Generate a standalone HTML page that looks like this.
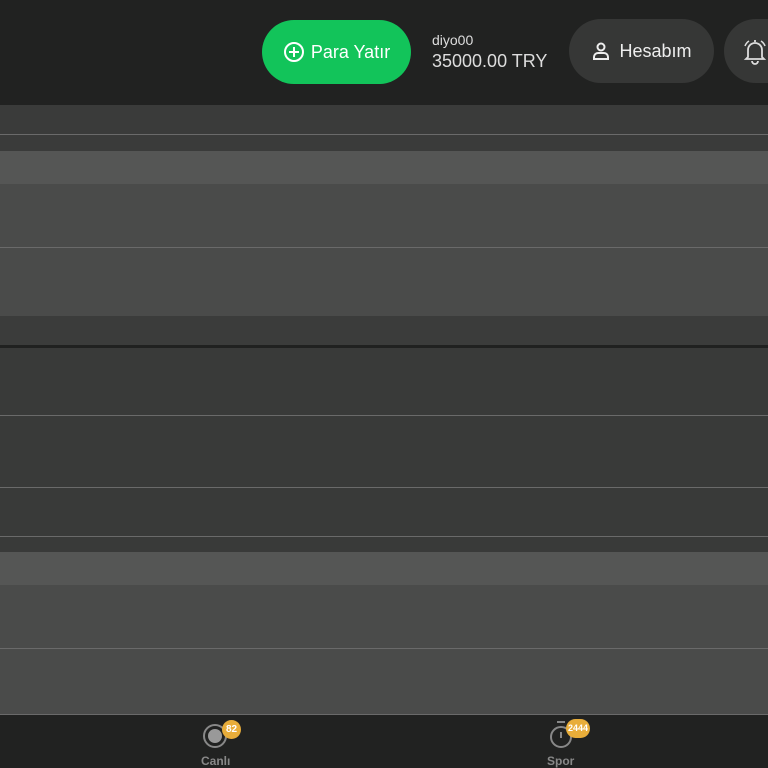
<!DOCTYPE html>
<html><head><meta charset="utf-8"><style>
*{margin:0;padding:0;box-sizing:border-box}
body{width:768px;height:768px;overflow:hidden;background:#393939;font-family:"Liberation Sans",sans-serif;position:relative}
.b{position:absolute;left:0;width:768px}
.l{position:absolute;left:0;width:768px;height:1px;background:#6a6a6a}
</style></head><body>
<div class="b" style="top:0;height:105px;background:#212221"></div>
<div class="b" style="top:105px;height:46px;background:#3a3b3a"></div>
<div class="l" style="top:134px"></div>
<div class="b" style="top:151px;height:33px;background:#555655"></div>
<div class="b" style="top:184px;height:132px;background:#4a4b4a"></div>
<div class="l" style="top:247px"></div>
<div class="b" style="top:316px;height:29px;background:#3b3c3b"></div>
<div class="b" style="top:345px;height:3px;background:#202120"></div>
<div class="b" style="top:348px;height:204px;background:#393a39"></div>
<div class="l" style="top:415px"></div>
<div class="l" style="top:487px"></div>
<div class="l" style="top:536px"></div>
<div class="b" style="top:552px;height:33px;background:#555655"></div>
<div class="b" style="top:585px;height:129px;background:#4a4b4a"></div>
<div class="l" style="top:648px"></div>
<div class="l" style="top:714px"></div>
<div class="b" style="top:715px;height:53px;background:#212221"></div>

<div style="position:absolute;left:262px;top:20px;width:149px;height:64px;border-radius:32px;background:#12c45a;color:#fff;font-size:18px;display:flex;align-items:center;justify-content:center;gap:6px">
<svg width="22" height="22" viewBox="0 0 22 22"><circle cx="11" cy="11" r="9" fill="none" stroke="#fff" stroke-width="2"/><path d="M11 6v10M6 11h10" stroke="#fff" stroke-width="2"/></svg>Para Yatır</div>
<div style="position:absolute;left:432px;top:32px;color:#ddd;font-size:14px">diyo00</div>
<div style="position:absolute;left:432px;top:51px;color:#ddd;font-size:18px">35000.00 TRY</div>
<div style="position:absolute;left:569px;top:19px;width:145px;height:64px;border-radius:32px;background:#363736;color:#eee;font-size:18px;display:flex;align-items:center;justify-content:center;gap:8px">
<svg width="20" height="20" viewBox="0 0 20 20"><circle cx="10" cy="6" r="3.5" fill="none" stroke="#eee" stroke-width="2"/><path d="M3 18v-2a4 4 0 0 1 4-4h6a4 4 0 0 1 4 4v2z" fill="none" stroke="#eee" stroke-width="2"/></svg>Hesabım</div>
<div style="position:absolute;left:724px;top:19px;width:80px;height:64px;border-radius:32px;background:#363736"></div>
<svg style="position:absolute;left:742px;top:37px" width="26" height="28" viewBox="0 0 26 28"><path d="M13 3v2M6 20V13a7 7 0 0 1 14 0v7l2 2H4z M10 24a3 3 0 0 0 6 0" fill="none" stroke="#ddd" stroke-width="1.8"/><path d="M3 9a10 10 0 0 1 4-5M23 9a10 10 0 0 0-4-5" fill="none" stroke="#ddd" stroke-width="1.5"/></svg>

<svg style="position:absolute;left:202px;top:723px" width="26" height="26" viewBox="0 0 26 26"><circle cx="13" cy="13" r="11" fill="none" stroke="#888" stroke-width="2"/><circle cx="13" cy="13" r="7" fill="#999"/></svg>
<div style="position:absolute;left:222px;top:720px;width:19px;height:19px;border-radius:50%;background:#e8ad3a;color:#fff;font-size:10px;font-weight:bold;text-align:center;line-height:19px">82</div>
<div style="position:absolute;left:201px;top:754px;color:#888;font-size:12px;font-weight:bold">Canlı</div>
<svg style="position:absolute;left:548px;top:720px" width="26" height="30" viewBox="0 0 26 30"><path d="M9 2h8" stroke="#888" stroke-width="2"/><circle cx="13" cy="17" r="10" fill="none" stroke="#888" stroke-width="2"/><path d="M13 12v6" stroke="#888" stroke-width="2"/></svg>
<div style="position:absolute;left:566px;top:719px;width:24px;height:19px;border-radius:10px;background:#e8ad3a;color:#fff;font-size:9px;font-weight:bold;text-align:center;line-height:19px">2444</div>
<div style="position:absolute;left:547px;top:754px;color:#888;font-size:12px;font-weight:bold">Spor</div>
</body></html>
